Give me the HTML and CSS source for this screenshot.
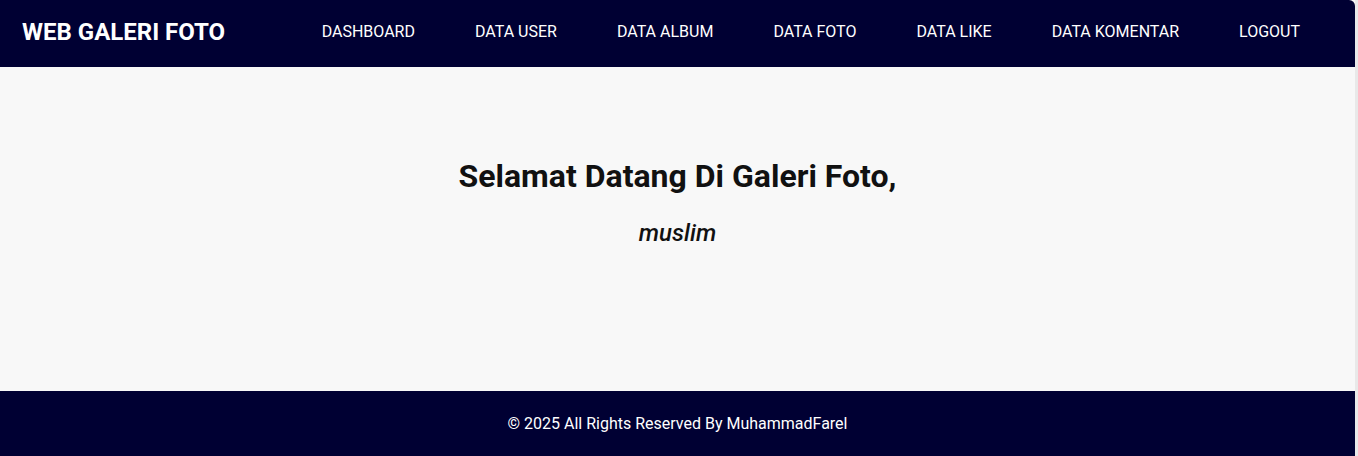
FILE: index.html
```html
<!DOCTYPE html>
<html lang="id">
<head>
<meta charset="utf-8">
<title>Web Galeri Foto</title>
<link rel="stylesheet" href="styles.css">
</head>
<body>
<header class="navbar">
  <div class="brand">WEB GALERI FOTO</div>
  <nav class="menu">
    <a href="#">DASHBOARD</a>
    <a href="#">DATA USER</a>
    <a href="#">DATA ALBUM</a>
    <a href="#">DATA FOTO</a>
    <a href="#">DATA LIKE</a>
    <a href="#">DATA KOMENTAR</a>
    <a href="#">LOGOUT</a>
  </nav>
</header>
<main class="content">
  <h1 class="title">Selamat Datang Di Galeri Foto,</h1>
  <p class="user">muslim</p>
</main>
<footer class="footer">© 2025 All Rights Reserved By MuhammadFarel</footer>
</body>
</html>
```
FILE: styles.css
```css
html {
  background: #e9e9e9;
}
body {
  margin: 0 3px 0 0;
  background: #f8f8f8;
  font-family: Roboto, "Liberation Sans", Arial, sans-serif;
  color: #111;
}
.navbar {
  height: 67px;
  box-sizing: border-box;
  background: #000033;
  display: flex;
  align-items: center;
  padding: 0 25px 4px 22px;
  border-top-right-radius: 6px;
}
.brand {
  color: #fff;
  font-weight: 700;
  font-size: 24px;
  margin-top: 1px;
}
.menu {
  margin-left: auto;
  display: flex;
}
.menu a {
  color: #fff;
  text-decoration: none;
  font-size: 16px;
  padding: 0 30px;
}
.content {
  height: 324px;
  box-sizing: border-box;
  padding-top: 90px;
  text-align: center;
}
.title {
  margin: 0;
  font-size: 32px;
  font-weight: 700;
  color: #111;
}
.user {
  margin: 24px 0 0;
  font-size: 24px;
  font-weight: 500;
  font-style: italic;
  color: #111;
}
.footer {
  height: 65px;
  background: #000033;
  color: #fff;
  font-size: 16px;
  display: flex;
  align-items: center;
  justify-content: center;
}
```
